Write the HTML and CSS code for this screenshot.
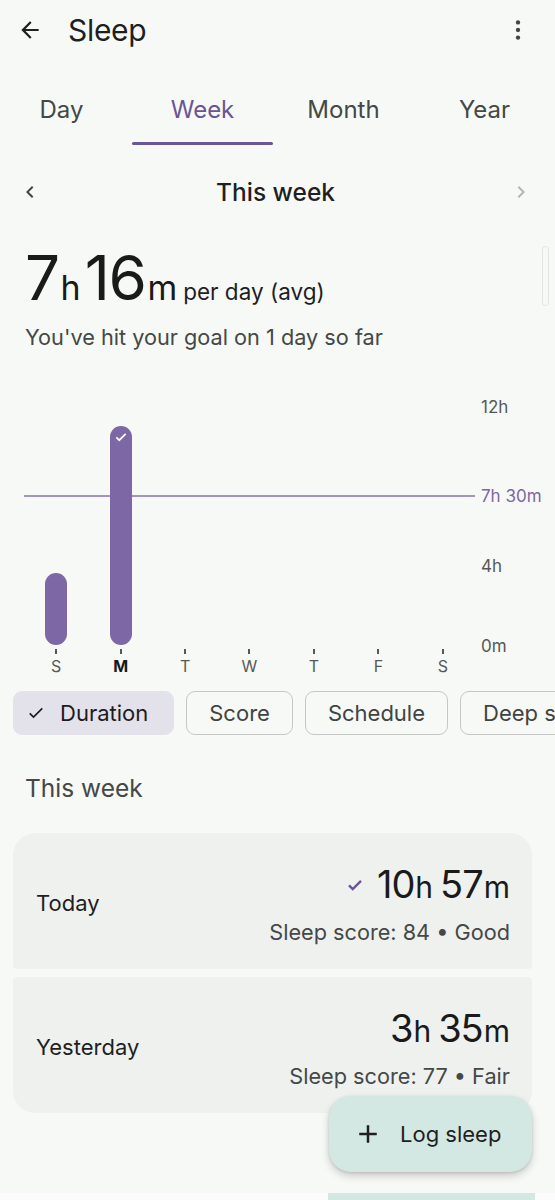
FILE: index.html
```html
<!DOCTYPE html>
<html lang="en">
<head>
<meta charset="utf-8">
<title>Sleep</title>
<link rel="stylesheet" href="styles.css">
</head>
<body>
<div class="screen">
  <header class="topbar">
    <svg class="icon back" viewBox="0 0 24 24" width="26" height="26"><path d="M20 11H7.83l5.59-5.59L12 4l-8 8 8 8 1.41-1.41L7.83 13H20v-2z" fill="#1f1f1f"/></svg>
    <h1 class="title">Sleep</h1>
    <svg class="icon more" viewBox="0 0 24 24" width="26" height="26"><circle cx="12" cy="5" r="2" fill="#444"/><circle cx="12" cy="12" r="2" fill="#444"/><circle cx="12" cy="19" r="2" fill="#444"/></svg>
  </header>

  <nav class="tabs">
    <div class="tab">Day</div>
    <div class="tab active">Week</div>
    <div class="tab">Month</div>
    <div class="tab">Year</div>
  </nav>

  <div class="weeknav">
    <svg viewBox="0 0 24 24" width="24" height="24"><path d="M15.41 7.41 14 6l-6 6 6 6 1.41-1.41L10.83 12z" fill="#444"/></svg>
    <div class="weeknav-label">This week</div>
    <svg viewBox="0 0 24 24" width="24" height="24"><path d="M8.59 16.59 10 18l6-6-6-6-1.41 1.41L13.17 12z" fill="#b5b5b5"/></svg>
  </div>

  <section class="summary">
    <div class="avg"><span class="num">7</span><span class="unit">h</span><span class="num">16</span><span class="unit">m</span><span class="per">per day (avg)</span></div>
    <p class="goal">You've hit your goal on 1 day so far</p>
    <div class="scrollthumb"></div>
  </section>

  <section class="chart">
    <div class="plot">
      <div class="goalline"></div>
      <div class="col"><div class="bar" style="height:72px"></div></div>
      <div class="col"><div class="bar" style="height:219px"><svg class="barcheck" viewBox="0 0 24 24" width="14" height="14"><path d="M4 12.5l5 5L20 6.5" fill="none" stroke="#fff" stroke-width="3"/></svg></div></div>
      <div class="col"></div>
      <div class="col"></div>
      <div class="col"></div>
      <div class="col"></div>
      <div class="col"></div>
    </div>
    <div class="axis">
      <span class="ylab" style="top:0px">12h</span>
      <span class="ylab goal-lab" style="top:89px">7h 30m</span>
      <span class="ylab" style="top:159px">4h</span>
      <span class="ylab" style="top:239px">0m</span>
    </div>
    <div class="days">
      <div class="day">S</div>
      <div class="day today">M</div>
      <div class="day">T</div>
      <div class="day">W</div>
      <div class="day">T</div>
      <div class="day">F</div>
      <div class="day">S</div>
    </div>
  </section>

  <div class="chips">
    <div class="chip selected"><svg viewBox="0 0 24 24" width="20" height="20"><path d="M4.5 12.5l4.5 4.5L19.5 6.5" fill="none" stroke="#1d1b20" stroke-width="2"/></svg>Duration</div>
    <div class="chip">Score</div>
    <div class="chip">Schedule</div>
    <div class="chip">Deep sleep</div>
  </div>

  <h2 class="section-title">This week</h2>

  <div class="list">
    <div class="card first">
      <div class="card-day">Today</div>
      <div class="card-right">
        <div class="dur"><svg class="durcheck" viewBox="0 0 24 24" width="18" height="18"><path d="M4 12.5l5 5L20 6.5" fill="none" stroke="#6b5596" stroke-width="3.2"/></svg><span class="dnum">10</span><span class="dunit">h</span> <span class="dnum">57</span><span class="dunit">m</span></div>
        <div class="score">Sleep score: 84 • Good</div>
      </div>
    </div>
    <div class="card last">
      <div class="card-day">Yesterday</div>
      <div class="card-right">
        <div class="dur"><span class="dnum">3</span><span class="dunit">h</span> <span class="dnum">35</span><span class="dunit">m</span></div>
        <div class="score">Sleep score: 77 • Fair</div>
      </div>
    </div>
  </div>

  <div class="fab"><svg viewBox="0 0 24 24" width="30" height="30"><path d="M19 13h-6v6h-2v-6H5v-2h6V5h2v6h6v2z" fill="#1f1f1f"/></svg><span>Log sleep</span></div>

  <div class="bottomstrip"><div class="peek"></div></div>
</div>
</body>
</html>
```
FILE: styles.css
```css
* { box-sizing: border-box; }
html, body { margin: 0; padding: 0; }
body {
  background: #f7f9f7;
  font-family: Inter, Roboto, "Noto Sans", sans-serif;
  color: #1f1f1f;
  width: 555px;
  height: 1200px;
  overflow: hidden;
}
.screen { position: relative; height: 1200px; }

.topbar {
  height: 60px;
  display: flex;
  align-items: center;
  padding: 0 24px 0 17px;
}
.back { flex: none; }
.title {
  margin: 0 0 0 25px;
  font-size: 30px;
  font-weight: 400;
  flex: 1;
  letter-spacing: -0.3px;
}
.more { flex: none; }

.tabs {
  display: flex;
  height: 85px;
  margin-left: -9px;
}
.tab {
  width: 141px;
  flex: none;
  text-align: center;
  font-size: 24px;
  padding-top: 35px;
  color: #444846;
  position: relative;
}
.tab.active { color: #6b5596; }
.tab.active::after {
  content: "";
  position: absolute;
  left: 0; right: 0; bottom: 0;
  height: 3px;
  background: #6b5596;
  border-radius: 2px;
}

.weeknav {
  display: flex;
  justify-content: space-between;
  padding: 35px 22px 0 18px;
  height: 92px;
  align-items: flex-start;
}
.weeknav-label {
  font-size: 24.5px;
  font-weight: 500;
  line-height: 30px;
  margin-top: -3px;
  color: #1f1f1f;
}

.summary { position: relative; padding: 0 25px; height: 140px; }
.avg {
  display: flex;
  align-items: baseline;
  height: 72px;
  padding-top: 5px;
  line-height: 72px;
}
.num { font-size: 62px; letter-spacing: -1.5px; color: #1a1a1a; }
.unit { font-size: 34px; margin: 0 4px 0 2px; color: #1a1a1a; }
.per { font-size: 22.5px; margin-left: 2px; color: #1f1f1f; }
.goal {
  margin: 15px 0 0;
  font-size: 21.7px;
  color: #444846;
}
.scrollthumb {
  position: absolute;
  right: 6px;
  top: 9px;
  width: 7px;
  height: 60px;
  border: 1.5px solid #e2e4e2;
  border-radius: 4px;
}

.chart {
  display: grid;
  grid-template-columns: 451px 1fr;
  margin-left: 24px;
  padding-top: 30px;
}
.plot {
  position: relative;
  height: 240px;
  display: grid;
  grid-template-columns: repeat(7, 1fr);
  align-items: end;
}
.col { display: flex; justify-content: center; align-items: flex-end; height: 100%; padding-bottom: 2px; }
.bar {
  width: 22px;
  border-radius: 11px;
  background: #7e67a5;
  display: flex;
  justify-content: center;
  position: relative;
  z-index: 1;
}
.barcheck { margin-top: 4px; }
.goalline {
  position: absolute;
  left: 0; right: 0;
  top: 88px;
  height: 2px;
  background: #a394c4;
}
.axis { position: relative; }
.ylab {
  position: absolute;
  left: 6px;
  transform: translateY(-50%);
  font-size: 17px;
  color: #555956;
  white-space: nowrap;
}
.goal-lab { color: #7e67a5; }
.days {
  display: grid;
  grid-template-columns: repeat(7, 1fr);
}
.day {
  text-align: center;
  font-size: 16px;
  color: #555956;
  padding-top: 8px;
  position: relative;
  line-height: 22px;
}
.day::before {
  content: "";
  position: absolute;
  top: 2px;
  left: 50%;
  width: 2px;
  height: 5px;
  margin-left: -1px;
  background: #555956;
}
.day.today { font-weight: 700; color: #1a1a1a; }

.chips {
  display: flex;
  gap: 12px;
  padding-left: 13px;
  margin-top: 14px;
  white-space: nowrap;
  overflow: hidden;
}
.chip {
  flex: none;
  height: 44px;
  border: 1.5px solid #c5c7c5;
  border-radius: 9px;
  display: flex;
  align-items: center;
  padding: 0 22px;
  font-size: 22px;
  color: #3f4441;
}
.chip.selected {
  background: #e3e1ea;
  border-color: #e3e1ea;
  padding: 0 25px 0 12px;
  color: #1d1b20;
}
.chip.selected svg { margin-right: 14px; }

.section-title {
  margin: 0;
  padding: 38px 25px 0;
  font-size: 24.5px;
  font-weight: 400;
  color: #444846;
  height: 98px;
}

.list { padding: 0 23px 0 13px; display: flex; flex-direction: column; gap: 8px; }
.card {
  background: #eff1ef;
  height: 136px;
  display: flex;
  align-items: center;
  justify-content: space-between;
  padding: 0 22px 0 23px;
}
.card.first { border-radius: 22px 22px 4px 4px; }
.card.last { border-radius: 4px 4px 22px 22px; }
.card-day { font-size: 22px; color: #1f1f1f; margin-top: 4px; }
.card-right { text-align: right; margin-top: 4px; }
.dur { display: flex; align-items: baseline; justify-content: flex-end; color: #1a1a1a; line-height: 44px; }
.dnum { font-size: 38px; letter-spacing: -1px; }
.dunit { font-size: 30px; margin: 0 7px 0 1px; }
.dur .dunit:last-child { margin-right: 0; }
.durcheck { margin-right: 13px; align-self: center; }
.score { font-size: 21.7px; color: #444846; margin-top: 10px; }

.fab {
  position: absolute;
  left: 329px;
  top: 1096px;
  width: 203px;
  height: 76px;
  border-radius: 22px;
  background: #d3e8e2;
  box-shadow: 0 4px 8px rgba(0,0,0,0.18), 0 1px 3px rgba(0,0,0,0.12);
  display: flex;
  align-items: center;
  padding-left: 24px;
  gap: 17px;
  font-size: 22px;
  color: #1f1f1f;
  z-index: 2;
}

.bottomstrip {
  position: absolute;
  left: 0; right: 0;
  top: 1193px;
  height: 7px;
  background: #fafbfa;
}
.peek {
  margin-left: 328px;
  width: 207px;
  height: 7px;
  background: #d3e8e2;
}
```
